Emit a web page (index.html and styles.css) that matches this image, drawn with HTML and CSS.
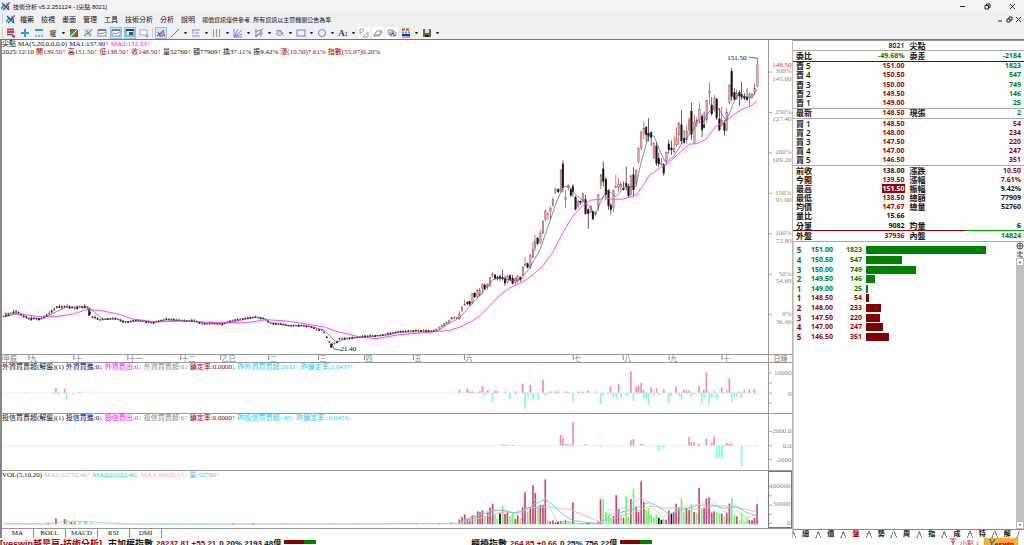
FILE: index.html
```html
<!DOCTYPE html>
<html lang="zh-Hant">
<head>
  <meta charset="UTF-8" />
  <title>技術分析 v5.2.251124 - [尖點 8021]</title>
  <meta name="viewport" content="width=device-width, initial-scale=1.0"/>
  <link rel="stylesheet" href="styles.css">
</head>
<body>

  <svg class="defs" aria-hidden="true">
    <symbol id="app" viewBox="0 0 9 9">
      <rect width="9" height="9" fill="#d8eef8"/>
      <path d="M0 7L3 3L5 5L9 0" stroke="#2b8fc0" stroke-width="1.5" fill="none"/>
      <path d="M1 1L8 8M2 8L7 3" stroke="#275a80" stroke-width="1.2"/>
      <path d="M6 1V4M7.500 4V7" stroke="#d23" stroke-width="1"/>
    </symbol>
  </svg>

  <header class="titlebar">
    <svg class="app-icon"><use href="#app"/></svg>
    <span class="title">技術分析 v5.2.251124 - [尖點 8021]</span>
    <button class="win" aria-label="最小化"><svg viewBox="0 0 7 7"><path d="M1 3.500H6"/></svg></button>
    <button class="win" aria-label="還原"><svg viewBox="0 0 7 7"><path d="M1 2.500H4.500V6H1ZM2.500 2.500V1H6V4.500H4.500"/></svg></button>
    <button class="win" aria-label="關閉"><svg viewBox="0 0 7 7"><path d="M1 1L6 6M6 1L1 6"/></svg></button>
  </header>

  <nav class="menubar">
    <i class="grip"></i>
    <svg class="app-icon"><use href="#app"/></svg>
    <button>檔案</button>
    <button>檢視</button>
    <button>畫面</button>
    <button>管理</button>
    <button>工具</button>
    <button>技術分析</button>
    <button>分析</button>
    <button>說明</button>
    <span class="notice">報價資訊僅供參考, 所有資訊以主管機關公告為準</span>
    <button class="win" aria-label="最小化視窗"><svg viewBox="0 0 7 7"><path d="M1 5H5"/></svg></button>
    <button class="win" aria-label="還原視窗"><svg viewBox="0 0 7 7"><path d="M1 3H4V6H1ZM3 3V1H6V4H4"/></svg></button>
    <button class="win" aria-label="關閉視窗"><svg viewBox="0 0 7 7"><path d="M1 1L6 6M6 1L1 6"/></svg></button>
  </nav>

  <div class="toolbar">
    <i class="grip"></i>
    <button class="tool" aria-label="自選"><svg viewBox="0 0 10 10"><path d="M1 1.500H8M1 4H8" stroke="#d33" stroke-width="2"/><path d="M1 6.500H7" stroke="#2a6f9c" stroke-width="1.500"/><path d="M6 7.500L9 9" stroke="#d33" stroke-width="2"/></svg></button>
    <button class="tool" aria-label="新增"><svg viewBox="0 0 10 10"><path d="M5 1V9M1 5H9" stroke="#2a9fd8" stroke-width="2"/></svg></button>
    <button class="tool" aria-label="版面"><svg viewBox="0 0 10 10"><rect x="1" y="1" width="8" height="8" fill="#dceefa"/><path d="M1 2H9" stroke="#2a9fd8" stroke-width="2"/><path d="M1 8H9" stroke="#678" stroke-dasharray="2 1"/></svg></button>
    <button class="tool word">權</button><button class="drop" aria-label="權息選單"></button>
    <button class="tool" aria-label="紅綠"><svg viewBox="0 0 10 10"><rect x="1" y="1" width="8" height="8" fill="#e22"/><path d="M1 9V5L5 1H9L5 9Z" fill="#1b4"/><path d="M1 9L9 1" stroke="#fff"/></svg></button>
    <button class="tool" aria-label="疊圖"><svg viewBox="0 0 10 10"><rect x="1" y="1" width="8" height="8" fill="#cde"/><path d="M1 8L4 5L5 6L9 1M3 2L8 8" stroke="#687" fill="none"/></svg></button>
    <button class="tool" aria-label="走勢"><svg viewBox="0 0 10 10"><rect x="1" y="2" width="8" height="6" fill="#fff" stroke="#69b"/><path d="M1 2H9" stroke="#357ca8" stroke-width="1.500"/><path d="M2 6L4 5L5 6L8 4" stroke="#e52" fill="none"/></svg></button>
    <button class="tool on" aria-label="K線"><svg viewBox="0 0 10 10"><rect x="1" y="2" width="8" height="6" fill="#fff" stroke="#69b"/><path d="M1 2H9" stroke="#357ca8" stroke-width="1.500"/><path d="M2 6L4 5L5 6L8 4" stroke="#e52" fill="none"/></svg></button>
    <button class="tool on" aria-label="報價"><svg viewBox="0 0 10 10"><rect x="1" y="2" width="8" height="6" fill="#def" stroke="#48a"/><path d="M1 2H9" stroke="#246" stroke-width="2"/><rect x="4" y="4" width="4" height="3" fill="#456"/></svg></button>
    <button class="tool" aria-label="設定"><svg viewBox="0 0 10 10"><rect x="1" y="2" width="7" height="5" fill="#fff" stroke="#9ab"/><circle cx="8" cy="8" r="1.500" fill="#9ab"/></svg></button>
    <i class="grip"></i>
    <button class="tool on" aria-label="畫線"><svg viewBox="0 0 10 10"><path d="M1 8L8 2M2 4L5 9" stroke="#44a"/><path d="M3 8L7 3L9 8Z" fill="#d99" stroke="#a66"/></svg></button>
    <button class="tool" aria-label="直線"><svg viewBox="0 0 10 10"><path d="M1 9L9 1" stroke="#66a"/></svg></button><button class="drop" aria-label="直線選單"></button>
    <button class="tool" aria-label="水平線"><svg viewBox="0 0 10 10"><path d="M1 2H9M1 8H9M2 2V6M4 5H8" stroke="#88d"/></svg></button><button class="drop" aria-label="水平線選單"></button>
    <button class="tool" aria-label="週期線"><svg viewBox="0 0 10 10"><path d="M1.500 1V9M4.500 1V9M7.500 1V9" stroke="#999"/></svg></button><button class="drop" aria-label="週期線選單"></button>
    <button class="tool" aria-label="扇形線"><svg viewBox="0 0 10 10"><path d="M1 9V1M1 9L5 1M1 9L9 2M1 9L9 6M1 9H9" stroke="#77f"/></svg></button><button class="drop" aria-label="扇形線選單"></button>
    <button class="tool" aria-label="通道"><svg viewBox="0 0 10 10"><path d="M1 4L9 1M1 8L9 5M2 1V9M7 2V9M2 9L7 3" stroke="#88a"/></svg></button><button class="drop" aria-label="通道選單"></button>
    <button class="tool" aria-label="波浪"><svg viewBox="0 0 10 10"><path d="M1 3L4 2L9 8M1 6L5 2L8 5L5 8Z" stroke="#99b" fill="#dde"/></svg></button><button class="drop" aria-label="波浪選單"></button>
    <button class="tool" aria-label="矩形"><svg viewBox="0 0 10 10"><rect x="1" y="2" width="8" height="6" fill="none" stroke="#77f"/></svg></button><button class="drop" aria-label="矩形選單"></button>
    <button class="tool" aria-label="圓形"><svg viewBox="0 0 10 10"><circle cx="5" cy="5" r="3.500" fill="none" stroke="#77f"/></svg></button><button class="drop" aria-label="圓形選單"></button>
    <button class="tool letter">A:</button><button class="drop" aria-label="文字選單"></button>
    <button class="tool lit" aria-label="複製線"><svg viewBox="0 0 10 10"><path d="M1 6V1H5M4 9H9V4M1 6L5 2M4 9L9 4" stroke="#d88" fill="none"/></svg></button>
    <button class="tool lit" aria-label="橡皮擦"><svg viewBox="0 0 10 10"><path d="M1 7L4 3H9L6 7ZM1 7V8H6L9 4" stroke="#889" fill="#fff"/></svg></button>
    <button class="tool lit" aria-label="全部清除"><svg viewBox="0 0 10 10"><path d="M1 2H6V6H1ZM3 4H9V8H3Z" stroke="#88a" fill="#fff"/><path d="M4 7L6 5L8 8" stroke="#336" fill="none"/></svg></button>
    <button class="tool" aria-label="顏色"><svg viewBox="0 0 10 10"><path d="M1 1.500H9" stroke="#e33" stroke-width="2" stroke-dasharray="3 1"/><path d="M1 4.500H9" stroke="#3c3" stroke-width="2" stroke-dasharray="2 1"/><path d="M1 7H9" stroke="#22e" stroke-width="2"/><path d="M1 9H9" stroke="#c3c"/></svg></button><button class="drop" aria-label="顏色選單"></button>
    <button class="tool" aria-label="儲存"><svg viewBox="0 0 10 10"><path d="M1 1H9V9H1Z" fill="#663"/><path d="M3 1H7V5H3Z" fill="#ddd"/><path d="M3 7H7V9H3Z" fill="#222"/></svg></button><button class="drop" aria-label="儲存選單"></button>
  </div>

  <main class="workspace">
    <section class="charts">
      <div class="pane price">
        <div class="plot">
          <div class="legend">
            <p><span>尖點</span><span>MA(5,20,0,0,0,0)</span><span class="navy">MA1:137.90↑</span><span class="pink">MA2:132.33↑</span></p>
            <p><span>2025/12/10</span><span class="red">開139.50↑</span><span class="red">高151.50↑</span><span class="red">低138.50↑</span><span class="red">收148.50↑</span><span>量52760↑</span><span>額77909↑</span><span>換37.11%</span><span>振9.42%</span><span class="red">漲(10.50)7.61%</span><span class="red">指數(55.97)0.20%</span></p>
          </div>
          <svg class="canvas" id="price"></svg>
        </div>
        <svg class="axis" id="priceAxis"></svg>
      </div>
      <div class="pane dates">
        <svg class="plot" id="dateAxis"></svg>
        <span class="axis period">日線</span>
      </div>
      <div class="pane foreign">
        <div class="plot">
          <div class="legend"><p><span>外資買賣超(解盤)(1)</span><span class="navy">外資買進:0↓</span><span class="pink">外資賣出:0↓</span><span class="gray">外資買賣超:0↓</span><span class="red">鎖定率:0.0000↓</span><span class="sky">昨外資買賣超:2032↑</span><span class="sky">昨鎖定率:2.0437↑</span></p></div>
          <svg class="canvas" id="foreign"></svg>
        </div>
        <svg class="axis" id="foreignAxis"></svg>
      </div>
      <div class="pane trust">
        <div class="plot">
          <div class="legend"><p><span>投信買賣超(解盤)(1)</span><span class="navy">投信買進:0↓</span><span class="pink">投信賣出:0↓</span><span class="gray">投信買賣超:0↑</span><span class="red">鎖定率:0.0000↑</span><span class="sky">昨投信買賣超:-45↓</span><span class="sky">昨鎖定率:-0.0453↓</span></p></div>
          <svg class="canvas" id="trust"></svg>
        </div>
        <svg class="axis" id="trustAxis"></svg>
      </div>
      <div class="pane volume">
        <div class="plot">
          <div class="legend"><p><span>VOL(5,10,20)</span><span class="silver">MA1:22732.40↑</span><span class="aqua">MA2:21122.40↓</span><span class="salmon">MA3:30628.15↓</span><span class="sky">量:52760↑</span></p></div>
          <svg class="canvas" id="volume"></svg>
        </div>
        <svg class="axis" id="volumeAxis"></svg>
      </div>
      <div class="indicators">
        <button>MA</button><button>BOLL</button><button>MACD</button><button>RSI</button><button>DMI</button>
      </div>
    </section>

    <aside class="side">
      <table class="quote">
        <tr class="name"><th colspan="2">8021</th><th colspan="2">尖點</th></tr>
        <tr class="ratio"><th>委比</th><td class="green">-49.68%</td><th>委差</th><td class="green">-2184</td></tr>
        <tr><th>賣 5</th><td class="red">151.00</td><th></th><td class="green">1823</td></tr>
        <tr><th>賣 4</th><td class="red">150.50</td><th></th><td class="green">547</td></tr>
        <tr><th>賣 3</th><td class="red">150.00</td><th></th><td class="green">749</td></tr>
        <tr><th>賣 2</th><td class="red">149.50</td><th></th><td class="green">146</td></tr>
        <tr><th>賣 1</th><td class="red">149.00</td><th></th><td class="green">25</td></tr>
        <tr class="last"><th>最新</th><td class="red">148.50</td><th>現張</th><td class="green">2</td></tr>
        <tr><th>買 1</th><td class="red">148.50</td><th></th><td class="red">54</td></tr>
        <tr><th>買 2</th><td class="red">148.00</td><th></th><td class="red">234</td></tr>
        <tr><th>買 3</th><td class="red">147.50</td><th></th><td class="red">220</td></tr>
        <tr><th>買 4</th><td class="red">147.00</td><th></th><td class="red">247</td></tr>
        <tr class="rule"><th>買 5</th><td class="red">146.50</td><th></th><td class="red">351</td></tr>
        <tr><th>前收</th><td>138.00</td><th>漲跌</th><td class="red">10.50</td></tr>
        <tr><th>今開</th><td class="red">139.50</td><th>漲幅</th><td class="red">7.61%</td></tr>
        <tr><th>最高</th><td><mark>151.50</mark></td><th>振幅</th><td>9.42%</td></tr>
        <tr><th>最低</th><td class="red">138.50</td><th>總額</th><td>77909</td></tr>
        <tr><th>均價</th><td class="red">147.67</td><th>總量</th><td>52760</td></tr>
        <tr><th>量比</th><td>15.66</td><th></th><td></td></tr>
        <tr class="split"><th>分筆</th><td>9082</td><th>均量</th><td>6</td></tr>
        <tr class="rule"><th>外盤</th><td class="red">37936</td><th>內盤</th><td class="green">14824</td></tr>
      </table>

      <div class="depth">
        <table class="book">
          <tbody class="green">
            <tr><th>5</th><td>151.00</td><td>1823</td><td class="bar"><i style="width:80%"></i></td></tr>
            <tr><th>4</th><td>150.50</td><td>547</td><td class="bar"><i style="width:24%"></i></td></tr>
            <tr><th>3</th><td>150.00</td><td>749</td><td class="bar"><i style="width:33%"></i></td></tr>
            <tr><th>2</th><td>149.50</td><td>146</td><td class="bar"><i style="width:6%"></i></td></tr>
            <tr><th>1</th><td>149.00</td><td>25</td><td class="bar"><i style="width:1%"></i></td></tr>
          </tbody>
          <tbody class="red">
            <tr><th>1</th><td>148.50</td><td>54</td><td class="bar"><i style="width:2%"></i></td></tr>
            <tr><th>2</th><td>148.00</td><td>233</td><td class="bar"><i style="width:10%"></i></td></tr>
            <tr><th>3</th><td>147.50</td><td>220</td><td class="bar"><i style="width:9%"></i></td></tr>
            <tr><th>4</th><td>147.00</td><td>247</td><td class="bar"><i style="width:11%"></i></td></tr>
            <tr><th>5</th><td>146.50</td><td>351</td><td class="bar"><i style="width:15%"></i></td></tr>
          </tbody>
        </table>
        <div class="scroll">
          <button aria-label="放大"><svg viewBox="0 0 8 8"><circle cx="4" cy="4" r="3"/><path d="M1 4H7M4 1V7"/></svg></button>
          <button aria-label="切換"><svg viewBox="0 0 8 8"><path d="M1 3H7M4 1V7H7M1 6H3"/></svg></button>
          <button class="arrow" aria-label="向上"><svg viewBox="0 0 8 8"><path d="M3 5L4 3L5 5Z"/></svg></button>
          <div class="track"></div>
          <button class="arrow" aria-label="向下"><svg viewBox="0 0 8 8"><path d="M3 3L4 5L5 3Z"/></svg></button>
        </div>
      </div>

      <div class="side-tabs">
        <button>細</button><button>價</button><button class="active">盤</button><button>勢</button><button>周</button><button>指</button><button>成</button><button>特</button><button>解</button>
      </div>
    </aside>
  </main>

  <footer class="status">
    <div class="index">
      <b class="red brand">[yeswin越是贏-技術分析]</b>
      <b>市加權指數</b><b class="num red">28237.81 +55.21</b><b class="num">0.20% 2193.48億</b><i class="gauge"></i>
    </div>
    <div class="index">
      <b>櫃檯指數</b><b class="num red">264.85 +0.66</b><b class="num">0.25% 756.22億</b><i class="gauge"></i>
    </div>
    <div class="links">
      <svg viewBox="0 0 8 8"><path d="M1 1H7M4 1V8M2 3L4 5L6 3" stroke="#d24" fill="none"/></svg>
      <span>小點。</span>
      <a href="#" class="logo"><em>Y</em>eswin</a>
    </div>
  </footer>

  <script src="chart.js"></script>
</body>
</html>
```
FILE: styles.css
```css
:root {
  --red: #900;
  --green: #008000;
  --line: #999;
  --bar: #f0f0f0;
}

* {
  box-sizing: border-box;
}

body {
  margin: 0;
  height: 100vh;
  display: flex;
  flex-direction: column;
  overflow: hidden;
  background: #fff;
  color: #111;
  font-family: "Liberation Sans", "Noto Sans CJK TC", sans-serif;
  font-size: 7px;
}

button {
  margin: 0;
  padding: 0;
  border: 0;
  background: none;
  color: inherit;
  font: inherit;
}

svg {
  display: block;
}

.defs {
  display: none;
}

p {
  margin: 0;
}

.red { color: var(--red); }
.green { color: var(--green); }
.navy { color: #00007b; }
.pink { color: #f0f; }
.gray { color: #888; }
.silver { color: #bbb; }
.sky { color: #2cf; }
.aqua { color: #0dc; }
.salmon { color: #faa; }

/* window chrome */
.titlebar {
  flex: 0 0 12px;
  display: flex;
  align-items: center;
  gap: 3px;
  padding: 0 8px 0 1px;
  background: #f3f1f3;
  font-size: 6px;
}

.app-icon {
  width: 9px;
  height: 9px;
}

.title {
  flex: 1;
}

.win svg {
  width: 7px;
  height: 7px;
  fill: none;
  stroke: #222;
  stroke-width: 1;
}

.titlebar .win {
  margin-left: 15px;
}

.menubar {
  flex: 0 0 14px;
  display: flex;
  align-items: center;
  gap: 7px;
  padding: 0 2px;
  background: var(--bar);
}

.menubar .app-icon {
  margin: 0 -2px 0 -4px;
}

.menubar .win + .win {
  margin-left: -5px;
}

.notice {
  flex: 1;
  font-size: 6px;
}

.grip {
  width: 1px;
  height: 10px;
  background: #ccc;
}

.toolbar {
  flex: 0 0 14px;
  display: flex;
  align-items: center;
  gap: 2px;
  padding: 0 2px;
  background: var(--bar);
  border-bottom: 1px solid #777;
}

.tool {
  width: 12px;
  height: 12px;
  border: 1px solid transparent;
}

.tool svg {
  width: 10px;
  height: 10px;
  fill: none;
}

.tool.on {
  background: #d5e8f8;
  border-color: #8bbfe8;
}

.tool.lit {
  background: #fff;
}

.tool.letter {
  color: #338;
  font: bold 9px "Liberation Serif", serif;
}

.drop {
  width: 3px;
  margin: 0 1px;
  border-top: 2px solid #222;
  border-left: 1px solid transparent;
  border-right: 1px solid transparent;
}

/* workspace */
.workspace {
  flex: 1;
  min-height: 0;
  display: grid;
  grid-template-columns: 1fr 231px;
  grid-template-rows: minmax(0, 1fr);
  border-left: 2px solid #888;
}

.charts {
  display: grid;
  grid-template-rows: minmax(0, 314fr) 8px minmax(0, 51fr) minmax(0, 57fr) minmax(0, 58fr) 9px;
  min-width: 0;
  border-right: 1px solid #bbb;
}

.pane {
  display: grid;
  grid-template-columns: 1fr 24px;
  grid-template-rows: minmax(0, 1fr);
  min-height: 0;
  border-bottom: 1px solid var(--line);
}

.plot {
  position: relative;
  width: 100%;
  height: 100%;
  min-height: 0;
}

.canvas {
  position: absolute;
  inset: 0;
  width: 100%;
  height: 100%;
}

.pane text,
.legend {
  font-family: "Liberation Serif", "Noto Sans CJK TC", serif;
  font-size: 7px;
}

.legend {
  position: absolute;
  top: 0;
  left: 0;
  z-index: 1;
  line-height: 8px;
  white-space: nowrap;
}

.legend p {
  display: flex;
  gap: 2px;
}

.axis {
  width: 100%;
  height: 100%;
  border-left: 1px solid var(--line);
}

.axis text,
.dates {
  fill: #888;
  color: #777;
}

.axis text.now {
  fill: #f22;
}

.period {
  font-size: 7px;
  line-height: 7px;
  text-align: center;
}

.volume .axis {
  border: 1px solid #777;
}

.indicators {
  display: flex;
  font-family: "Liberation Serif", serif;
}

.indicators button {
  width: 32px;
  border-right: 1px solid #888;
}

/* quote panel */
.side {
  display: flex;
  flex-direction: column;
  min-width: 0;
  min-height: 0;
  font: bold 7px "Open Sans", "Noto Sans CJK TC", sans-serif;
}

table {
  border-collapse: collapse;
  border-spacing: 0;
}

th,
td {
  padding: 0;
  line-height: 8px;
}

.quote {
  width: 100%;
  height: 37vh;
  table-layout: fixed;
  border-top: 1px solid #999;
}

.quote col {
  width: 24%;
}

.quote th {
  padding-left: 3px;
  text-align: left;
  font-size: 8px;
  font-weight: 600;
  white-space: nowrap;
}

.quote td {
  text-align: right;
}

.quote td:nth-child(2) {
  padding-right: 4px;
}

.quote td:last-child {
  padding-right: 3px;
}

.quote th:nth-child(3),
.quote .name th:last-child {
  padding-left: 1px;
}

.quote .name th:first-child {
  padding-right: 4px;
  text-align: right;
  font-size: 7px;
}

.quote tr {
  border-bottom: 0 solid #aaa;
}

.quote .name,
.quote .last,
.quote .rule {
  border-bottom-width: 1px;
}

.quote .last {
  border-top: 1px solid #aaa;
}

.ratio td,
.ratio th {
  border-bottom: 1px solid #222;
}

.ratio th:first-child,
.split th,
.split td:nth-child(2) {
  border-bottom: 1px solid var(--red);
}

.split td:last-child {
  border-bottom: 1px solid #0a0;
}

mark {
  background: var(--red);
  color: #fff;
}

.depth {
  flex: 1;
  min-height: 0;
  display: flex;
  align-items: flex-start;
  border-left: 1px solid #ccc;
}

.book {
  flex: 1;
  height: 96px;
  margin-top: 4px;
  table-layout: fixed;
}

.book th {
  width: 10px;
  font-size: 8px;
}

.book td {
  width: 29px;
  text-align: right;
}

.book .bar {
  width: auto;
  padding-left: 4px;
}

.bar i {
  display: block;
  height: 8px;
  background: currentColor;
}

.book .red .bar {
  color: #800000;
}

.scroll {
  align-self: stretch;
  display: flex;
  flex-direction: column;
  width: 8px;
  background: var(--bar);
}

.scroll button {
  height: 8px;
}

.scroll svg {
  width: 8px;
  height: 8px;
  fill: none;
  stroke: #555;
}

.scroll .arrow {
  background: #fff;
  border: 1px solid #bbb;
}

.scroll .arrow svg {
  width: 6px;
  height: 6px;
}

.track {
  flex: 1;
  background: #c0c0c0;
}

.side-tabs {
  flex: 0 0 9px;
  display: flex;
  padding-right: 4px;
  border-top: 1px solid #888;
}

.side-tabs button {
  flex: 1;
  line-height: 8px;
  background:
    linear-gradient(70deg, transparent 2px, #888 2px, #888 3px, transparent 3px) left / 50% 100% no-repeat,
    linear-gradient(-70deg, transparent 2px, #888 2px, #888 3px, transparent 3px) right / 50% 100% no-repeat;
}

.side-tabs .active {
  color: var(--red);
}

/* status line */
.status {
  flex: 0 0 7px;
  display: flex;
  overflow: hidden;
  font-size: 9px;
  line-height: 12px;
  white-space: nowrap;
}

.index {
  flex: 0 0 46%;
  display: flex;
  gap: 3px;
}

.brand {
  margin-right: 3px;
}

.num {
  font-size: 8px;
}

.gauge {
  width: 32px;
  height: 4px;
  margin-top: 2px;
  background: linear-gradient(90deg, #800000 62%, #008000 62%);
}

.links {
  flex: 1;
  display: flex;
  justify-content: flex-end;
  gap: 3px;
  padding-right: 6px;
  color: #c33;
  font-size: 7px;
}

.links svg {
  width: 8px;
  height: 8px;
}

.logo {
  width: 34px;
  background: #fa3;
  color: #800;
  font-weight: bold;
  text-align: center;
  text-decoration: none;
}

.logo em {
  color: #08c;
  font-size: 10px;
}
```
FILE: chart.js
```javascript
const NS = "http://www.w3.org/2000/svg";
const SPAN = 2301;
const HALF = 1200;
const RALLY = 1320;

function add(parent, tag, attrs, text) {
  const el = document.createElementNS(NS, tag);
  for (const key in attrs) el.setAttribute(key, attrs[key]);
  if (text) el.textContent = text;
  parent.appendChild(el);
  return el;
}

function layer(id, y, height) {
  return add(document.getElementById(id), "svg", {
    width: "100%", height: "100%",
    viewBox: `6 ${y} ${SPAN} ${height}`, preserveAspectRatio: "none"
  });
}

function line(g, points, color, width = 2) {
  add(g, "polyline", { points, fill: "none", stroke: color, "stroke-width": width });
}

function bar(g, x, y, h, fill, w = 5) {
  add(g, "rect", { x: x - w / 2, y, width: w, height: h, fill });
}

function shift(list, dx, dy) {
  return list.split(" ").map(p => {
    const [x, y] = p.split(",").map(Number);
    return `${x + dx},${y + dy}`;
  }).join(" ");
}

// x, high, low, body top, body bottom, r = up / b = down
const candles = `0 860 872 862 870 r|8 855 862 856 860 r|15 850 860 852 858 r|22 846 854 848 852 r|29 840 852 842 848 r|37 832 840 834 838 r|45 830 838 833 837 r|53 832 838 834 837 r|60 815 840 825 838 r|68 798 818 802 812 r|76 780 798 794 797 r|84 785 796 788 792 b|91 785 798 786 794 b|99 760 794 762 790 r|106 758 775 760 772 b|114 748 776 752 770 r|121 745 770 753 766 r|129 730 762 735 745 r|136 732 750 736 748 b|144 732 750 735 742 r|152 710 742 714 738 r|159 696 714 704 708 r|167 703 718 706 716 b|175 708 722 712 716 b|182 704 724 710 716 b|190 690 722 714 718 b|197 708 738 716 730 b|205 705 732 710 728 r|212 705 725 708 720 b|220 706 734 715 732 b|228 712 734 716 730 r|235 706 730 710 725 r|243 710 726 714 720 b|251 680 710 682 706 r|257 652 680 674 678 r|265 668 686 672 682 b|273 643 688 646 684 r|281 606 656 628 652 r|287 585 634 605 626 r|295 592 616 595 612 b|303 572 612 580 608 r|311 542 582 546 580 r|318 508 545 514 538 r|326 518 542 522 525 r|334 500 540 505 516 r|341 472 500 480 496 r|349 444 462 450 458 r|357 446 460 448 456 b|365 388 458 392 452 r|371 362 458 372 444 b|379 450 505 472 478 r|387 435 452 438 442 r|395 445 472 450 466 b|401 432 470 440 455 b|409 468 512 472 508 b|417 480 505 484 500 r|424 482 495 484 488 b|431 458 490 462 485 r|439 465 525 480 522 b|447 505 567 510 522 b|455 495 520 500 518 r|461 515 540 516 538 b|469 515 530 520 524 r|477 462 512 464 500 r|485 402 448 405 436 r|492 365 440 387 425 b|500 412 480 418 465 b|508 448 510 452 498 b|515 490 522 496 510 b|523 450 517 453 503 r|530 405 445 440 444 r|538 415 455 434 442 r|545 425 452 433 443 r|553 425 452 446 450 b|561 380 452 430 440 b|568 432 474 440 468 b|575 405 470 408 465 r|583 382 470 405 450 b|591 388 440 392 430 r|598 322 370 325 365 r|606 272 332 278 325 r|614 245 298 265 280 r|621 258 306 262 285 b|628 235 305 280 290 b|636 274 318 278 292 b|644 306 358 310 355 r|652 306 378 320 370 b|659 338 382 355 372 b|667 355 378 370 374 r|674 370 408 374 400 b|682 335 375 337 362 r|689 300 342 312 330 b|697 302 345 324 330 b|705 290 342 325 336 r|712 262 322 295 315 r|719 245 315 250 285 r|727 210 312 255 303 b|735 270 312 295 308 b|743 255 312 275 300 r|750 232 285 240 270 r|757 188 300 214 283 b|766 225 310 248 310 r|773 232 262 240 250 r|781 188 252 208 240 r|789 222 292 230 270 b|795 215 265 255 262 b|803 180 248 182 240 r|811 127 195 154 160 r|818 172 228 195 222 b|826 165 215 176 210 r|833 175 240 177 234 b|841 205 274 237 270 b|848 200 260 240 256 r|856 240 287 250 272 b|863 205 275 216 270 r|871 132 192 136 187 r|878 84 182 94 170 b|886 145 180 158 178 b|893 148 180 160 175 r|901 150 198 158 168 b|908 125 180 163 172 b|916 160 180 170 176 b|924 145 182 172 180 b|932 158 200 164 175 r|939 160 178 162 166 r|947 130 165 145 155 r|955 54 142 75 138 r`;

// closing levels of the quiet months
const base = [[10,80],[30,72],[50,65],[85,87],[125,87],[150,70],[170,52],[200,50],[220,55],[260,50],[275,80],[300,90],[345,86],[375,98],[410,92],[460,100],[500,88],[560,94],[585,92],[605,103],[640,100],[665,105],[700,92],[765,82],[795,88],[815,102],[840,103],[870,108],[910,108],[940,113],[955,122],[970,120],[985,150],[995,165],[1010,160],[1022,145],[1040,148],[1060,145],[1095,140],[1140,138],[1200,126],[1250,123],[1305,124],[1320,114]];

function level(x) {
  let i = 1;
  while (i < base.length - 1 && base[i][0] < x) i++;
  const [a, b] = [base[i - 1], base[i]];
  return a[1] + (b[1] - a[1]) * (x - a[0]) / (b[0] - a[0]);
}

const price = layer("price", -750, 942);
let n = 0;
for (let x = 10; x < 1316; x += 7.65, n++) {
  const y = level(x);
  const wild = x < 300 ? 2 : 1;
  const color = (n * 7) % 5 < 2 ? "#a33" : "#111";
  const up = (n * 5) % 7 * wild / 2 + 2;
  bar(price, x, y - up, up + (n * 3) % 5 * wild / 2 + 2, color, 2);
  bar(price, x, y - 2, 3 + n % 3 * wild, color);
}
bar(price, 268, 56, 22, "#111", 6);
bar(price, 995, 162, 12, "#111", 6);

candles.split("|").forEach(row => {
  const [x, hi, lo, open, close, dir] = row.split(" ");
  const color = dir === "r" ? "#a33" : "#111";
  const cx = Number(x) + RALLY;
  bar(price, cx, hi - 750, lo - hi, color, 2);
  const body = { x: cx - 2.5, y: open - 750, width: 5, height: close - open, stroke: color, "stroke-width": 1 };
  body.fill = dir === "r" ? "#dba5a5" : color;
  add(price, "rect", body);
});

line(price, "10,70 60,73 110,80 170,80 220,73 260,60 300,62 350,72 400,88 470,97 550,94 640,98 740,99 800,90 860,94 930,105 975,112 1010,125 1080,142 1130,147 1200,135 1300,127 " +
  shift("0,875 30,872 60,863 95,846 120,829 150,800 180,768 210,745 250,727 280,706 310,680 340,638 370,580 400,530 430,498 455,481 485,478 495,471 515,478 550,478 590,467 610,440 630,407 660,386 685,371 715,345 750,313 775,311 800,298 830,260 865,240 890,220 915,205 935,199 954,183", RALLY, -750), "#f4f", 3);
line(price, "10,82 50,73 85,85 125,88 165,68 200,52 265,52 310,90 350,87 385,98 420,93 460,98 500,91 560,94 600,97 625,103 670,101 720,92 770,82 795,87 815,100 870,108 915,108 945,113 975,122 1010,158 1045,145 1100,142 1140,138 1165,136 1200,128 1305,125 " +
  shift("0,870 30,850 60,835 100,790 130,758 160,720 185,714 215,722 245,720 270,685 300,635 330,550 350,490 372,440 390,441 410,465 440,490 470,522 480,495 500,455 510,454 530,471 555,442 590,440 605,370 630,282 645,290 665,340 680,368 705,348 730,308 760,275 775,242 790,250 810,215 832,197 862,243 880,198 895,165 920,170 940,172 954,148", RALLY, -750), "#4a4aa8", 2);
line(price, "2250,-699 2275,-695", "#222");
line(price, "996,164 1004,178 1024,182", "#222");

const labels = document.getElementById("price");
add(labels, "text", { x: "97.2%", y: "6.3%", "text-anchor": "end" }, "151.50");
add(labels, "text", { x: "44.2%", y: "99.3%" }, "21.40");

function axis(id, marks) {
  const svg = document.getElementById(id);
  marks.forEach(([y, text, tick, cls]) => {
    if (tick) add(svg, "line", { x1: 0, x2: 3, y1: tick + "%", y2: tick + "%", stroke: "#aaa" });
    if (text) add(svg, "text", { x: "98%", y: y + "%", "text-anchor": "end", class: cls || "" }, text);
  });
}

const scale = [["300%", "145.60"], ["250%", "127.40"], ["200%", "109.20"], ["150%", "91.00"], ["100%", "72.80"], ["50%", "54.60"], ["0%", "36.40"]];
axis("priceAxis", [[8.6, "148.50", 0, "now"]]);
axis("priceAxis", scale.flatMap(([pct, value], i) => [
  [10.6 + i * 12.9, pct, 10.2 + i * 12.9],
  [13 + i * 12.9, value, 0]
]));
axis("foreignAxis", [[24, "10000", 20], [0, "", 40], [65, "0", 60], [0, "", 80]]);
axis("trustAxis", [[34, "2000.0", 31], [60, "0.0", 56], [85, "-2000", 81]]);
axis("volumeAxis", [[29, "100000", 26], [0, "", 43], [62, "50000", 60], [0, "", 77], [96, "0", 93]]);

const months = [[0, "甲辰"], [27, "九"], [72, "十"], [126, "十一"], [179, "十二"], [219, "乙巳"], [267, "二"], [317, "三"], [363, "四"], [412, "五"], [463, "六"], [572, "七"], [622, "八"], [668, "九"], [721, "十"]];
const dates = document.getElementById("dateAxis");
months.forEach(([x, month]) => {
  const at = x / 7.67 + "%";
  add(dates, "line", { x1: at, x2: at, y1: 0, y2: 5, stroke: "#888" });
  add(dates, "text", { x: at, y: 6, dx: 1, fill: "#777" }, month);
});

function flows(id, y, height, zero, ups, downs) {
  const g = layer(id, y, height);
  add(g, "line", { x1: 6, x2: 2275, y1: zero, y2: zero, stroke: "#fca", "stroke-width": 2, "stroke-dasharray": "5 3" });
  ups.split(" ").forEach(p => {
    const [x, h] = p.split(":").map(Number);
    bar(g, x + HALF, zero - h, h, "#f58aa8");
  });
  downs.split(" ").forEach(p => {
    const [x, h] = p.split(":").map(Number);
    bar(g, x + HALF, zero, h, "#7fd");
  });
}

flows("foreign", 216, 153, 307,
  "-1032:14 -1006:12 -960:3 180:10 204:13 212:4 219:4 241:5 249:21 265:8 287:6 294:6 318:4 349:4 370:28 393:24 431:40 454:4 469:4 476:4 500:4 507:3 538:4 550:4 567:7 590:4 634:20 658:27 695:66 711:19 718:22 726:30 733:8 756:17 772:14 794:11 831:20 854:9 862:7 870:7 900:20 914:10 922:62 945:5 968:16 983:7 991:46 1021:4 1036:8 1051:11 1066:12",
  "-1120:3 -1040:5 -1024:6 -1000:20 -980:4 227:3 234:4 257:9 264:3 279:27 332:20 348:4 377:50 386:13 401:20 416:20 438:10 446:6 521:26 605:35 612:8 627:5 643:16 651:14 666:17 681:7 688:7 703:25 734:16 741:16 748:37 764:7 779:8 809:34 817:10 840:12 847:20 877:12 885:5 908:31 915:13 930:37 938:15 953:20 975:5 998:29 1006:13 1013:12 1028:16");

flows("trust", 40, 171, 136,
  "310:3 318:3 326:2 340:2 484:33 491:22 499:4 506:4 514:4 521:70 559:4 695:16 703:19 726:5 734:3 870:26 877:10 885:10 900:6 922:21 938:8 945:27 983:8 991:5 998:6",
  "604:5 779:17 787:5 794:8 953:40 961:36 969:40 976:5 1028:62");

const volume = layer("volume", 211, 177);
const inks = { m: "#c9447c", g: "#6f6", k: "#111" };
const volumes = "-1055:5m -1032:18m -1006:16m -1000:12g -990:8g -985:7m -975:6m -960:8g -945:9g -940:9g -925:5g -500:3m -440:3m -350:3g -210:4g 52:2m 120:3m 155:5m 180:15m 188:22m 196:30m 204:17m 211:15m 219:28m 227:24g 235:40m 242:38m 249:43m 257:26g 265:36m 272:52m 280:64m 287:30g 294:18g 302:33k 310:58g 317:32m 324:42m 332:25g 340:36g 348:16m 355:28m 363:18g 370:53m 377:99m 385:40g 393:53m 401:121m 408:97m 416:57g 423:60m 431:60m 438:139m 446:12g 453:9m 461:12m 469:6m 476:8k 484:10m 491:12g 499:12m 507:10g 514:8g 521:68m 529:6g 537:4g 545:3m 552:3m 560:5m 567:6k 575:4g 582:3m 590:4m 597:8m 604:77m 612:77g 620:38g 628:30g 635:18g 643:26m 651:90m 658:48m 666:28g 673:20m 681:87g 688:24g 695:78m 703:109g 711:55m 718:38m 726:133m 734:70m 741:45g 748:50g 756:30g 764:20g 772:30g 779:20k 787:14k 794:16g 801:14m 809:43m 817:32k 824:36m 831:64m 839:53m 847:80g 854:38g 862:50m 870:44m 877:62g 885:38m 892:36g 900:113m 908:46g 915:52m 922:80m 930:83m 938:36m 945:40m 953:38g 961:34g 968:33m 976:24g 983:36m 991:64m 998:83g 1006:30g 1013:25m 1021:12g 1028:36g 1036:10g 1044:20g 1051:14m 1059:12m 1066:20m 1074:62m";
volumes.split(" ").forEach(p => {
  const [x, rest] = p.split(":");
  const h = parseInt(rest, 10);
  bar(volume, Number(x) + HALF, 376 - h, h, inks[rest.slice(-1)]);
});
line(volume, "10,376 1380,375", "#fbb");
line(volume, "10,374 80,374 150,374 200,366 280,369 380,375 460,376 640,376 800,375 1060,375 1380,373", "#6cb");
line(volume, shift("180,373 240,358 300,340 350,340 400,325 445,322 510,330 560,350 600,368 640,360 700,340 750,320 800,326 850,325 900,330 960,318 1010,323 1074,338", HALF, 0), "#fbb5a5", 3);
line(volume, shift("180,371 220,355 280,335 310,333 340,340 370,337 400,315 440,299 465,320 490,345 520,364 560,370 600,374 640,345 680,335 700,330 750,308 775,320 810,345 850,330 900,317 940,316 975,327 1010,320 1040,338 1074,350", HALF, 0), "#4dd", 3);
line(volume, shift("180,369 220,350 280,330 330,338 365,345 400,300 440,297 460,340 475,372 510,374 600,374 630,330 650,333 690,320 725,293 745,305 790,355 830,335 860,318 900,315 935,298 975,338 1000,320 1030,350 1050,355 1074,342", HALF, 0), "#bbb");
```
